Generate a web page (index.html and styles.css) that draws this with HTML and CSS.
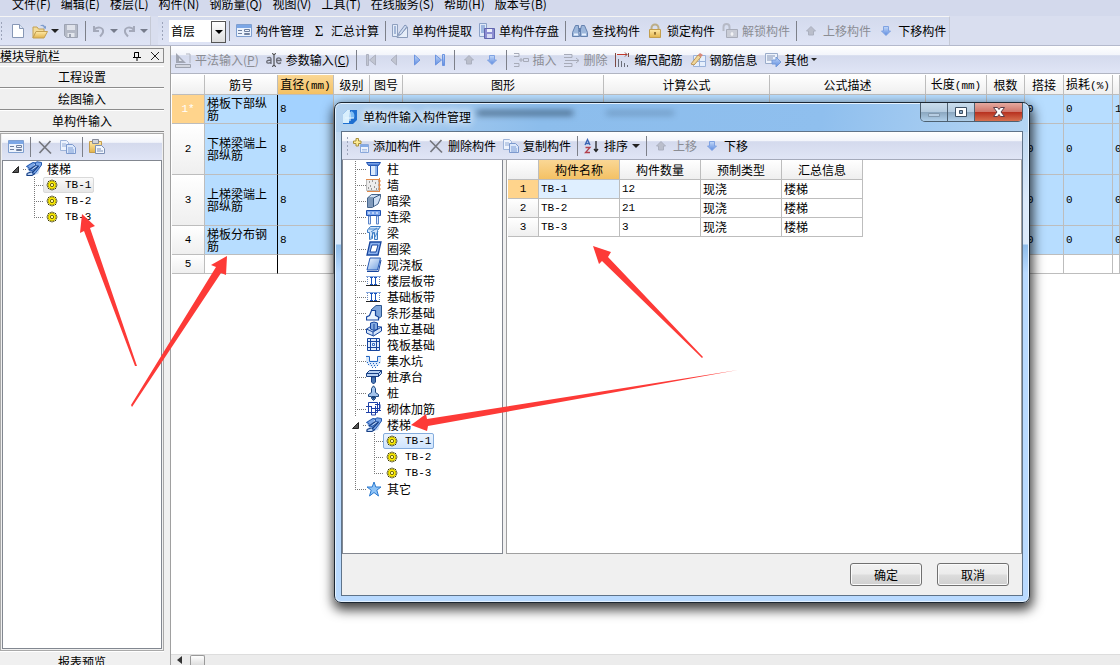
FILE: index.html
```
<!DOCTYPE html>
<html lang="zh-CN">
<head>
<meta charset="utf-8">
<title>单构件输入</title>
<link rel="stylesheet" href="styles.css">
</head>
<body>
<svg class="defs" aria-hidden="true">
  <defs>
    <linearGradient id="blue" x1="0" y1="0" x2="1" y2="1"><stop offset="0" stop-color="#f4f9ff"/><stop offset="1" stop-color="#6f9fe0"/></linearGradient>
    <linearGradient id="deep" x1="0" y1="0" x2="0" y2="1"><stop offset="0" stop-color="#9cc0f5"/><stop offset="1" stop-color="#2f62c8"/></linearGradient>
    <linearGradient id="pale" x1="0" y1="0" x2="0" y2="1"><stop offset="0" stop-color="#c4d9f8"/><stop offset="1" stop-color="#5c8ae0"/></linearGradient>
    <linearGradient id="gold" x1="0" y1="0" x2="0" y2="1"><stop offset="0" stop-color="#ffeaa8"/><stop offset="1" stop-color="#e2b34c"/></linearGradient>
  </defs>
  <symbol id="new" viewBox="0 0 16 16"><path d="M2.500 1.500h7l4 4v9h-11z" fill="#fff" stroke="#8797b5"/><path d="M9.500 1.500v4h4" fill="#dce6f6" stroke="#8797b5"/></symbol>
  <symbol id="open" viewBox="0 0 16 16"><path d="M1 4h4l1.500 2H12v3H4l-3 6z" fill="#f3dc9a" stroke="#c4a052"/><path d="M1 15l3-6.500h11.500L12 15z" fill="url(#gold)" stroke="#c4a052"/><path d="M8 3c2-2 4-1.500 5 .5l1-.8v3l-3-.4 1-.9c-1-1.500-2.500-1.700-4-1.400z" fill="#7f9dcc"/></symbol>
  <symbol id="save" viewBox="0 0 16 16"><path d="M1.500 1.500h13v13h-11l-2-2z" fill="#b4b9c6" stroke="#9da3b2"/><path d="M4 2h8v5H4z" fill="#dfe2ea"/><path d="M4.500 10h7v4h-7z" fill="#e3e6ed"/><path d="M6 11h2v3H6z" fill="#9da3b2"/></symbol>
  <symbol id="undo" viewBox="0 0 16 16"><path d="M3 3v5h5" fill="none" stroke="#a4a9ba" stroke-width="2"/><path d="M3 7c3-4 10-3 9 2-.3 2-1.500 3-3 4.500" fill="none" stroke="#a4a9ba" stroke-width="2"/></symbol>
  <symbol id="redo" viewBox="0 0 16 16"><path d="M13 3v5H8" fill="none" stroke="#a4a9ba" stroke-width="2"/><path d="M13 7c-3-4-10-3-9 2 .3 2 1.500 3 3 4.500" fill="none" stroke="#a4a9ba" stroke-width="2"/></symbol>
  <symbol id="form" viewBox="0 0 16 16"><path d="M.5 1.500h15v12H.5z" fill="#edf3fd" stroke="#7f9fd0"/><path d="M1 2h14v3H1z" fill="#7ba6e6"/><path d="M2 7.500h4M2 10.500h4M8.500 6.500h5v2h-5zM8.500 10.500h5v1h-5z" fill="none" stroke="#6e7f9e"/></symbol>
  <symbol id="extract" viewBox="0 0 16 16"><path d="M.5 1.500h5v12h-5z" fill="#e2eaf7" stroke="#8fa0bf"/><path d="M2 4h2M2 6h2M2 8h2M2 10h2" stroke="#6483b8"/><path d="M5 14.500L15.500 4v10.500z" fill="#e6edf8" stroke="#8b9cba"/><path d="M7 10l6-8 2 1.500-6 8-2.500.7z" fill="#cfdcf0" stroke="#8093b8"/></symbol>
  <symbol id="store" viewBox="0 0 16 16"><path d="M.5.5h7v13h-7z" fill="#dfe9f8" stroke="#8ba1c8"/><path d="M2 3h4M2 5h4M2 7h3M2 9h3" stroke="#5d83c6"/><path d="M5.500 5.500h10v10h-10z" fill="#8d8ed2" stroke="#6065ad"/><path d="M8 6h5v3H8z" fill="#eceffc"/><path d="M8 11h5v4H8z" fill="#d8dcf4"/></symbol>
  <symbol id="find" viewBox="0 0 16 16"><path d="M3.500 2.500h3v4l1 7h-7v-4zM9.500 2.500h3l3 7v4h-7v-7z" fill="#9db7db" stroke="#6481ae"/><path d="M2 11.500h4M10 11.500h4" stroke="#e8f1ff" stroke-width="2"/><path d="M7 5h2v4H7z" fill="#5f7dad"/></symbol>
  <symbol id="lock" viewBox="0 0 16 16"><path d="M4.500 7V5a3.500 3.500 0 0 1 7 0v2" fill="none" stroke="#bcae88" stroke-width="2"/><path d="M2.500 6.500h11v8h-11z" fill="url(#gold)" stroke="#c39e4e"/><path d="M8 9v3M7 10h2" stroke="#75521b"/></symbol>
  <symbol id="unlock" viewBox="0 0 16 16"><path d="M1.500 8V4a3 3 0 0 1 6 0v3" fill="none" stroke="#b6bac6" stroke-width="2"/><path d="M4.500 6.500h11v8h-11z" fill="#c9ccd6" stroke="#a8acb9"/><path d="M10 9v4M8.500 11h3" stroke="#fff"/></symbol>
  <symbol id="up" viewBox="0 0 16 16"><path d="M8 3.500l4.500 4.500h-2v4h-5V8h-2z" fill="#babecb" stroke="#abb0bf"/></symbol>
  <symbol id="down" viewBox="0 0 16 16"><path d="M8 12.500L3.500 8h2V3.500h5V8h2z" fill="url(#pale)" stroke="#7fa2e2"/></symbol>
  <symbol id="level" viewBox="0 0 16 16"><path d="M1 1v10h10z" fill="#a1a6b3"/><path d="M4 6v3h3z" fill="#e4e7ef"/><path d="M.5 12.500h15v3H.5z" fill="#d3d6df" stroke="#9da2ae"/><path d="M11 2h4v9" stroke="#b0b4c0" fill="none"/></symbol>
  <symbol id="param" viewBox="0 0 16 16"><path d="M1 6c3-1.500 4 0 4 1v5M5 8C1.500 8 .7 9 .7 10S3 12 5 10M10.500 8.500h4.500c0-3.500-4.500-3.500-4.500 0 0 3.500 3 3.500 4.500 2" fill="none" stroke="#6b6d77" stroke-width="1.300"/><path d="M6 1.500l2 1 2-1M8 2.500v11M6 14.500l2-1 2 1" fill="none" stroke="#333"/></symbol>
  <symbol id="first" viewBox="0 0 16 16"><path d="M3.500 2.500h2v11h-2zM12.500 3v10l-6-5z" fill="#c1c5d1" stroke="#adb1c0"/></symbol>
  <symbol id="prev" viewBox="0 0 16 16"><path d="M10.500 3v10L5 8z" fill="#c1c5d1" stroke="#adb1c0"/></symbol>
  <symbol id="next" viewBox="0 0 16 16"><path d="M5.500 3v10L11 8z" fill="url(#pale)" stroke="#6c94e0"/></symbol>
  <symbol id="last" viewBox="0 0 16 16"><path d="M3.500 3v10l6-5zM10.500 2.500h2v11h-2z" fill="url(#pale)" stroke="#6c94e0"/></symbol>
  <symbol id="insert" viewBox="0 0 16 16"><path d="M1 1.500h5v3H1M1 11.500h5v3H1M6 8h4M8 6v4M10.500 6.500h5v3h-5z" fill="none" stroke="#a7abb8"/></symbol>
  <symbol id="remove" viewBox="0 0 16 16"><path d="M0 2.500h8v3H0M0 11.500h8v3H0M1 8.500h14M12 6l3 2.500L12 11" fill="none" stroke="#a7abb8"/></symbol>
  <symbol id="scale" viewBox="0 0 16 16"><path d="M2 2.500h10" stroke="#c5392b"/><path d="M.5 1v14M13.500 1v4M10 .5l2 2-2 2" fill="none" stroke="#7d4a44"/><path d="M3.500 7v8M6.500 9v6M9.500 11v4M12.500 13v2" stroke="#6b6e79"/></symbol>
  <symbol id="info" viewBox="0 0 16 16"><path d="M3.500 3.500h12v11h-12z" fill="#e6effc" stroke="#9ab2da"/><path d="M4 9.500h11M9.500 4v10" stroke="#9ab2da"/><path d="M1 12L8 3l3 2-7 8z" fill="#f1d79a" stroke="#ba9457"/><path d="M8 3l2-2 3 2-2 2z" fill="#d9897a"/></symbol>
  <symbol id="other" viewBox="0 0 16 16"><path d="M.5 1.500h12v10H.5z" fill="#eef3fc" stroke="#9aacca"/><path d="M2 4h8M2 6h6M2 8h5" stroke="#8294b5"/><path d="M7 8h4V5l5 5-5 5v-3H7z" fill="url(#pale)" stroke="#759ad9"/></symbol>
  <symbol id="cross" viewBox="0 0 16 16"><path d="M2 2.500l12 12M13.500 2L2.500 14" fill="none" stroke="#75777e" stroke-width="1.700"/></symbol>
  <symbol id="copy" viewBox="0 0 16 16"><path d="M.5 1.500h6l2 2v8h-8z" fill="#edf3fd" stroke="#9eb4d9"/><path d="M2 5h4M2 7h4" stroke="#93acd6"/><path d="M6.500 5.500h6l3 3v6h-9z" fill="#dce8fb" stroke="#7c99cd"/><path d="M8 9h5M8 11h6M8 13h6" stroke="#7d9dd5"/></symbol>
  <symbol id="paste" viewBox="0 0 16 16"><path d="M.5 2.500h12v11H.5z" fill="url(#gold)" stroke="#c39c4c"/><path d="M3.500.5h6v4h-6z" fill="#d2d5dc" stroke="#858a98"/><path d="M6.500 6.500h6l3 3v5h-9z" fill="#f2f6fd" stroke="#7c90b5"/><path d="M8 10h4M8 12h6" stroke="#7c90b5"/></symbol>
  <symbol id="add" viewBox="0 0 16 16"><path d="M7.500 6.500h8v8h-8z" fill="#edf3fd" stroke="#8aa8da"/><path d="M8 7h7v2H8z" fill="#84abe7"/><path d="M9 11.500h5M9 13h5" stroke="#adc2e6"/><path d="M3 .5h2.500V3H8v2.500H5.500V8H3V5.500H.5V3H3z" fill="#ffec94" stroke="#a8903d"/></symbol>
  <symbol id="sort" viewBox="0 0 16 16"><path d="M1 7L3.500 1.500 6 7M2 5.500h3" fill="none" stroke="#3864b4" stroke-width="1.300"/><path d="M1.500 9.500h4.500l-4.500 5H6" fill="none" stroke="#b2404e" stroke-width="1.300"/><path d="M12 3v10M10 11l2 2.500 2-2.500" fill="none" stroke="#222" stroke-width="1.300"/></symbol>
  <symbol id="stair" viewBox="0 0 16 16"><path d="M0 5l6-4h9l1 1-4 11-11 2-1-2 3-2z" fill="#c3d9f8"/><path d="M.5 5.500L7 1.500l2.500.5v2.500l3 .5L6 9.500 3 9V6.500zM6 9.500v2.500l3 .5 6.500-8.500V1.500L11 .8 8.500 2.500" fill="#7ba6e6" stroke="#2458ae"/><path d="M3 9l6.500-4.500M6 12l6.500-7M1 12.500v2h5l3-2M1 12.500l4-1.500" fill="none" stroke="#173f84" stroke-width="1.200"/></symbol>
  <symbol id="gear" viewBox="0 0 12 12"><path d="M6 .5v11M.5 6h11M2 2l8 8M10 2l-8 8M4 1l4 10M8 1L4 11M1 4l10 4M11 4L1 8" stroke="#3d3800"/><circle cx="6" cy="6" r="4" fill="#ffee00" stroke="#8f8600" stroke-width=".6"/><circle cx="6" cy="6" r="1.700" fill="#fff79a" stroke="#4c4600" stroke-width=".8"/></symbol>
  <symbol id="column" viewBox="0 0 16 16"><path d="M.5 1.500h14l-2 3h-10z" fill="url(#deep)" stroke="#1c4fae"/><path d="M4.500 4.500h7v10h-7z" fill="#dceafc" stroke="#2a5cb4"/><path d="M9 5h2v9H9z" fill="#8fb4ec"/></symbol>
  <symbol id="wall" viewBox="0 0 16 16"><path d="M.5 2.500h12v11H.5z" fill="#ececec" stroke="#bbb"/><path d="M3 5h1M6 4h1M9 6h1M4 9h1M8 10h1M5 12h1M10 12h1M2 11h1" stroke="#444"/><path d="M13.500 1v14M0 2.500h13M12 4h3M12 8h3M12 12h3M1 14.500h12" stroke="#e08a4c"/></symbol>
  <symbol id="hidden-beam" viewBox="0 0 16 16"><path d="M1.500 5l4-3.500h9v3L12 11l-6 3.500h-4.500z" fill="#cfdff4" stroke="#46658c"/><path d="M1.500 5h6v9M7.500 5l7-3.500" fill="none" stroke="#35577f"/><path d="M2 6h5v8H2z" fill="#7f99ba"/></symbol>
  <symbol id="link-beam" viewBox="0 0 16 16"><path d="M.5 1.500h14v5H.5z" fill="#7aa4ec" stroke="#1c4fae"/><path d="M2 4h2M6 4h2M10 4h2" stroke="#fff"/><path d="M2.500 7h2v8h-2zM10.500 7h2v8h-2z" fill="#dbe9fd" stroke="#5b83c7"/></symbol>
  <symbol id="beam" viewBox="0 0 16 16"><path d="M1.500 5l3-3.500h10l-3 4v9h-3v-7h-2v6l-3 1v-7h-2z" fill="#cfe4fb" stroke="#3a7ac2"/><path d="M3 4h10M5 7l6-4M9 12l3-6M5 13l3-6" stroke="#4a88cc"/></symbol>
  <symbol id="ring-beam" viewBox="0 0 16 16"><path d="M4 1h11l-3 13H1z" fill="#8bb2ef" stroke="#17459d" stroke-width="1.300"/><path d="M6 4h6l-2 7H4z" fill="#fff" stroke="#17459d"/></symbol>
  <symbol id="slab" viewBox="0 0 16 16"><path d="M4 1h10.500l-3 12H1z" fill="url(#blue)" stroke="#2458b4"/><path d="M1 14.500h11.500L15 3" fill="none" stroke="#17459d"/></symbol>
  <symbol id="strip" viewBox="0 0 16 16"><path d="M0 3.500h15" stroke="#88a9df"/><path d="M0 12.500h14" stroke="#222"/><path d="M1.500 4v8M13.500 4v8" stroke="#6687bd" stroke-dasharray="1 1"/><path d="M4 4.500h3M4 11.500h3M8 4.500h3M8 11.500h3M5.500 4v8M9.500 4v8" stroke="#1853bd"/></symbol>
  <symbol id="strip-base" viewBox="0 0 16 16"><path d="M5 5l5-4.500h5.500v11l-3 2z" fill="#7fa6dc" stroke="#2c568e"/><path d="M5.500 5.500h4v5l3 1.500v3H.5v-3l3-1.500z" fill="#edf5ff" stroke="#17459d" stroke-width="1.200"/></symbol>
  <symbol id="single-base" viewBox="0 0 16 16"><path d="M.5 8l5-3 10 1v4l-8 5-7-3z" fill="#d3e3f9" stroke="#17459d"/><path d="M4.500 2l3.500-1 3.500 1v6L8 9.500 4.500 8z" fill="#84aae0" stroke="#17459d"/><path d="M8 3v6M.5 8L7 11l8.500-5M7 11v4" fill="none" stroke="#17459d"/></symbol>
  <symbol id="raft" viewBox="0 0 16 16"><path d="M1.500 1.500h12v12h-12z" fill="#e2edfc" stroke="#17459d"/><path d="M4.500 1v13M10.500 1v13M1 4.500h13M1 10.500h13" stroke="#17459d"/><path d="M6.500 6.500h2v2h-2z" fill="#fff" stroke="#3970c5"/></symbol>
  <symbol id="pit" viewBox="0 0 16 16"><path d="M0 2.500h3.500v5h8v-5H15v7c-4 6-11 6-15 0z" fill="#dbe9fb"/><path d="M0 3.500h3.500v5h8v-5H15" fill="none" stroke="#2467c1"/><path d="M1 9.500h1M4 10.500h1M7 10.500h1M10 10.500h1M13 9.500h1M2 11.500h1M5 12.500h1M8 12.500h1M11 12.500h1M6 14.500h1M9 14.500h1" stroke="#2467c1"/></symbol>
  <symbol id="cap" viewBox="0 0 16 16"><path d="M.5 4.500l3-3h12v3l-3 3H.5z" fill="#b6d0f2" stroke="#173f84"/><path d="M.5 4.500h12l3-3M12.500 4.500v3" fill="none" stroke="#173f84"/><path d="M5.500 8h4v5l-2 2-2-2z" fill="#4c78b3" stroke="#173f84"/></symbol>
  <symbol id="pile" viewBox="0 0 16 16"><path d="M5.500 3.500L7.500.8l2 2.700v4l3 2v2h-3v2l-2 2-2-2v-2h-3v-2l3-2z" fill="#a3c4ec" stroke="#1b467f"/><path d="M6 11h3v2l-1.500 2L6 13z" fill="#1b467f"/></symbol>
  <symbol id="masonry" viewBox="0 0 16 16"><path d="M2.500 1.500h9v10h-9zM0 5.500h6M0 11.500h6M5.500 5v9h4v-9M9 3.500h5v4H5M13.500 1v8M9 9.500h6" fill="none" stroke="#1e40a8"/></symbol>
  <symbol id="star" viewBox="0 0 16 16"><path d="M8 1l1.800 5H15l-4.200 3.200L12.500 15 8 11.500 3.500 15l1.700-5.800L1 6h5.200z" fill="#8fc4f7" stroke="#2b79cf"/></symbol>
  <symbol id="twist" viewBox="0 0 7 7"><path d="M6.500.500v6h-6z" fill="#555" stroke="#222"/></symbol>
  <symbol id="pin" viewBox="0 0 10 10"><path d="M2.500 6V1.500h4V6M6.500 1v5M1 6.500h8M5 7v3" fill="none" stroke="#000"/></symbol>
  <symbol id="close" viewBox="0 0 10 10"><path d="M1 1l8 8M9 1L1 9" stroke="#222" fill="none"/></symbol>
  <symbol id="app" viewBox="0 0 16 16"><path d="M5 1h10v10l-4 4H1V5z" fill="#1e6fd0"/><path d="M1 5l4-4h3l-1 13H1z" fill="#d9effd"/><path d="M9 2c3 1 4 4 3 7l-5 1z" fill="#7dbdf5"/><path d="M3 9h9M8 3v9" stroke="#e8f6ff"/></symbol>
</svg>

<nav class="menubar">
  <button>文件(F)</button><button>编辑(E)</button><button>楼层(L)</button><button>构件(N)</button><button>钢筋量(Q)</button><button>视图(V)</button><button>工具(T)</button><button>在线服务(S)</button><button>帮助(H)</button><button>版本号(B)</button>
</nav>

<div class="bar main-bar">
  <div class="group file-group">
    <i class="grip"></i>
    <button aria-label="新建"><svg><use href="#new"/></svg></button>
    <button class="drop" aria-label="打开"><svg><use href="#open"/></svg><i class="caret"></i></button>
    <button aria-label="保存" disabled><svg><use href="#save"/></svg></button>
    <i class="sep"></i>
    <button class="drop" aria-label="撤销" disabled><svg><use href="#undo"/></svg><i class="caret"></i></button>
    <button class="drop" aria-label="重做" disabled><svg><use href="#redo"/></svg><i class="caret"></i></button>
  </div>
  <div class="group">
    <i class="grip"></i>
    <span class="floor"><select aria-label="楼层"><option>首层</option></select></span>
    <i class="sep"></i>
    <button><svg><use href="#form"/></svg>构件管理</button>
    <button><span class="sigma">Σ</span>汇总计算</button>
    <i class="sep"></i>
    <button><svg><use href="#extract"/></svg>单构件提取</button>
    <button><svg><use href="#store"/></svg>单构件存盘</button>
    <i class="sep"></i>
    <button><svg><use href="#find"/></svg>查找构件</button>
    <button><svg><use href="#lock"/></svg>锁定构件</button>
    <button disabled><svg><use href="#unlock"/></svg>解锁构件</button>
    <i class="sep"></i>
    <button disabled><svg><use href="#up"/></svg>上移构件</button>
    <button><svg><use href="#down"/></svg>下移构件</button>
  </div>
</div>

<div class="workspace">
  <aside class="side">
    <header class="side-title"><span>模块导航栏</span><button aria-label="固定"><svg><use href="#pin"/></svg></button><button aria-label="关闭"><svg><use href="#close"/></svg></button></header>
    <button class="module">工程设置</button>
    <button class="module">绘图输入</button>
    <button class="module">单构件输入</button>
    <section class="side-panel">
      <div class="bar side-bar">
        <button aria-label="构件管理"><svg><use href="#form"/></svg></button>
        <i class="sep"></i>
        <button aria-label="删除"><svg><use href="#cross"/></svg></button>
        <button aria-label="复制"><svg><use href="#copy"/></svg></button>
        <i class="sep"></i>
        <button aria-label="粘贴"><svg><use href="#paste"/></svg></button>
      </div>
      <div class="side-tree">
        <ul class="tree">
          <li class="end"><div class="node"><span class="twist"><svg><use href="#twist"/></svg></span><svg><use href="#stair"/></svg>楼梯</div>
            <ul>
              <li><div class="node"><i class="stub"></i><span class="leaf current"><svg><use href="#gear"/></svg>TB-1</span></div></li>
              <li><div class="node"><i class="stub"></i><span class="leaf"><svg><use href="#gear"/></svg>TB-2</span></div></li>
              <li><div class="node"><i class="stub"></i><span class="leaf"><svg><use href="#gear"/></svg>TB-3</span></div></li>
            </ul>
          </li>
        </ul>
      </div>
    </section>
    <button class="module report">报表预览</button>
  </aside>

  <main class="editor">
    <div class="bar edit-bar">
      <button disabled><svg><use href="#level"/></svg><span>平法输入(<u>P</u>)</span></button>
      <button><svg><use href="#param"/></svg><span>参数输入(<u>C</u>)</span></button>
      <i class="sep"></i>
      <button aria-label="首条" disabled><svg><use href="#first"/></svg></button>
      <button aria-label="上一条" disabled><svg><use href="#prev"/></svg></button>
      <button aria-label="下一条"><svg><use href="#next"/></svg></button>
      <button aria-label="末条"><svg><use href="#last"/></svg></button>
      <i class="sep"></i>
      <button aria-label="上移" disabled><svg><use href="#up"/></svg></button>
      <button aria-label="下移"><svg><use href="#down"/></svg></button>
      <i class="sep"></i>
      <button disabled><svg><use href="#insert"/></svg>插入</button>
      <button disabled><svg><use href="#remove"/></svg>删除</button>
      <button><svg><use href="#scale"/></svg>缩尺配筋</button>
      <button><svg><use href="#info"/></svg>钢筋信息</button>
      <button><svg><use href="#other"/></svg>其他<i class="caret"></i></button>
    </div>
    <div class="sheet">
      <table class="grid rebar">
        <colgroup><col class="c-no"><col class="c-name"><col class="c-dia"><col class="c-grade"><col class="c-fig"><col class="c-shape"><col class="c-formula"><col class="c-desc"><col class="c-len"><col class="c-count"><col class="c-lap"><col class="c-loss"><col></colgroup>
        <thead><tr><th></th><th>筋号</th><th class="hot">直径<b>(mm)</b></th><th>级别</th><th>图号</th><th>图形</th><th>计算公式</th><th>公式描述</th><th>长度<b>(mm)</b></th><th>根数</th><th>搭接</th><th>损耗<b>(%)</b></th><th></th></tr></thead>
        <tbody>
          <tr class="short"><th class="active">1*</th><td>梯板下部纵筋</td><td class="focus">8</td><td></td><td></td><td></td><td></td><td></td><td></td><td></td><td>0</td><td>0</td><td>1</td></tr>
          <tr class="tall"><th>2</th><td>下梯梁端上部纵筋</td><td>8</td><td></td><td></td><td></td><td></td><td></td><td></td><td></td><td>0</td><td>0</td><td>0</td></tr>
          <tr class="tall"><th>3</th><td>上梯梁端上部纵筋</td><td>8</td><td></td><td></td><td></td><td></td><td></td><td></td><td></td><td>0</td><td>0</td><td>0</td></tr>
          <tr class="short"><th>4</th><td>梯板分布钢筋</td><td>8</td><td></td><td></td><td></td><td></td><td></td><td></td><td></td><td>0</td><td>0</td><td>0</td></tr>
          <tr class="blank"><th>5</th><td></td><td></td><td></td><td></td><td></td><td></td><td></td><td></td><td></td><td></td><td></td><td></td></tr>
        </tbody>
      </table>
    </div>
    <div class="scroll"><i class="scroll-arrow"></i><i class="scroll-thumb"></i></div>
  </main>
</div>

<section class="dialog" role="dialog" aria-labelledby="dialog-title">
  <header class="caption">
    <svg><use href="#app"/></svg><h1 id="dialog-title">单构件输入构件管理</h1>
    <i class="haze haze-shape"></i><i class="haze haze-formula"></i>
    <div class="window-buttons">
      <button aria-label="最小化" disabled><svg viewBox="0 0 20 14"><path d="M4.500 8.500h11v3h-11z" fill="#b7cde2" stroke="#8299ae"/></svg></button>
      <button aria-label="最大化"><svg viewBox="0 0 20 14"><path d="M4.500 2.500h11v9h-11z" fill="#fff" stroke="#3c4f63"/><path d="M8.500 5.500h3v3h-3z" fill="#8ba9c6" stroke="#3c4f63"/></svg></button>
      <button aria-label="关闭窗口" class="win-close"><svg viewBox="0 0 20 14"><path d="M4.500 2.500h4L10 4.500l1.500-2h4L12 7l3.500 4.500h-4L10 9.500l-1.500 2h-4L8 7z" fill="#fff" stroke="#5c3d47"/></svg></button>
    </div>
  </header>
  <div class="client">
    <div class="bar dialog-bar">
      <i class="grip"></i>
      <button><svg><use href="#add"/></svg>添加构件</button>
      <button><svg><use href="#cross"/></svg>删除构件</button>
      <button><svg><use href="#copy"/></svg>复制构件</button>
      <i class="sep"></i>
      <button><svg><use href="#sort"/></svg>排序<i class="caret"></i></button>
      <i class="sep"></i>
      <button disabled><svg><use href="#up"/></svg>上移</button>
      <button><svg><use href="#down"/></svg>下移</button>
    </div>
    <div class="panes">
      <div class="types">
        <ul class="tree">
          <li><div class="node"><i class="stub"></i><svg><use href="#column"/></svg>柱</div></li>
          <li><div class="node"><i class="stub"></i><svg><use href="#wall"/></svg>墙</div></li>
          <li><div class="node"><i class="stub"></i><svg><use href="#hidden-beam"/></svg>暗梁</div></li>
          <li><div class="node"><i class="stub"></i><svg><use href="#link-beam"/></svg>连梁</div></li>
          <li><div class="node"><i class="stub"></i><svg><use href="#beam"/></svg>梁</div></li>
          <li><div class="node"><i class="stub"></i><svg><use href="#ring-beam"/></svg>圈梁</div></li>
          <li><div class="node"><i class="stub"></i><svg><use href="#slab"/></svg>现浇板</div></li>
          <li><div class="node"><i class="stub"></i><svg><use href="#strip"/></svg>楼层板带</div></li>
          <li><div class="node"><i class="stub"></i><svg><use href="#strip"/></svg>基础板带</div></li>
          <li><div class="node"><i class="stub"></i><svg><use href="#strip-base"/></svg>条形基础</div></li>
          <li><div class="node"><i class="stub"></i><svg><use href="#single-base"/></svg>独立基础</div></li>
          <li><div class="node"><i class="stub"></i><svg><use href="#raft"/></svg>筏板基础</div></li>
          <li><div class="node"><i class="stub"></i><svg><use href="#pit"/></svg>集水坑</div></li>
          <li><div class="node"><i class="stub"></i><svg><use href="#cap"/></svg>桩承台</div></li>
          <li><div class="node"><i class="stub"></i><svg><use href="#pile"/></svg>桩</div></li>
          <li><div class="node"><i class="stub"></i><svg><use href="#masonry"/></svg>砌体加筋</div></li>
          <li><div class="node"><span class="twist"><svg><use href="#twist"/></svg></span><svg><use href="#stair"/></svg>楼梯</div>
            <ul>
              <li><div class="node"><i class="stub"></i><span class="leaf selected"><svg><use href="#gear"/></svg>TB-1</span></div></li>
              <li><div class="node"><i class="stub"></i><span class="leaf"><svg><use href="#gear"/></svg>TB-2</span></div></li>
              <li><div class="node"><i class="stub"></i><span class="leaf"><svg><use href="#gear"/></svg>TB-3</span></div></li>
            </ul>
          </li>
          <li><div class="node"><i class="stub"></i><svg><use href="#star"/></svg>其它</div></li>
        </ul>
      </div>
      <div class="parts">
        <table class="grid part-grid">
          <thead><tr><th></th><th class="hot">构件名称</th><th>构件数量</th><th>预制类型</th><th>汇总信息</th></tr></thead>
          <tbody>
            <tr><th class="active">1</th><td class="focus">TB-1</td><td>12</td><td>现浇</td><td>楼梯</td></tr>
            <tr><th>2</th><td>TB-2</td><td>21</td><td>现浇</td><td>楼梯</td></tr>
            <tr><th>3</th><td>TB-3</td><td>3</td><td>现浇</td><td>楼梯</td></tr>
          </tbody>
        </table>
      </div>
    </div>
    <footer class="actions"><button>确定</button><button>取消</button></footer>
  </div>
</section>

<svg class="marks" viewBox="0 0 1120 665" width="1120" height="665" aria-hidden="true">
  <path d="M82 214L95 226L90 228L137 366L135 366L84 231L80 233Z"/>
  <path d="M227 256L226 275L221 273L132 407L131 405L216 267L211 265Z"/>
  <path d="M593 246L611 252L608 257L703 357L702 358L602 261L599 264Z"/>
  <path d="M411 425L426 414L427 419L738 370L428 426L427 431Z"/>
</svg>
</body>
</html>
```
FILE: styles.css
```
* { box-sizing: border-box; }

body {
  margin: 0;
  height: 100vh;
  display: flex;
  flex-direction: column;
  overflow: hidden;
  position: relative;
  background: #f0f0f0;
  color: #000;
  font: 12px/16px "Noto Sans CJK SC", sans-serif;
}

button {
  font: inherit;
  color: inherit;
  border: 0;
  padding: 0;
  background: none;
}

ul { list-style: none; margin: 0; padding: 0; }
.defs { position: absolute; width: 0; height: 0; }

/* Menu and toolbars */
.menubar {
  display: flex;
  align-items: flex-end;
  flex: none;
  gap: 10px;
  height: 16px;
  padding: 0 12px 4px;
  background: #d3d9ec;
  white-space: nowrap;
}

.bar {
  display: flex;
  align-items: center;
  flex: none;
  white-space: nowrap;
  background: linear-gradient(#fff 0, #f3f5fb 32%, #d4daed 36%, #e0e5f6 100%);
}
.bar svg { width: 16px; height: 16px; flex: none; }
.bar button { display: flex; align-items: center; gap: 4px; padding: 0 3px 0 4px; }
.bar button:disabled { color: #8b8d94; }

.sep { width: 1px; height: 20px; margin: 0 2px 0 3px; background: #7d8089; flex: none; }
.caret { border: 4px solid transparent; border-top-color: #222; border-bottom-width: 0; }
.bar button:disabled .caret { border-top-color: #777c8c; }
.grip { width: 3px; height: 20px; flex: none; background: radial-gradient(circle, #9ba3b9 1px, transparent 1px) 0 0 / 3px 4px; }
.sigma { width: 16px; text-align: center; font: 15px/16px "Liberation Serif", serif; }

.main-bar { height: 30px; align-items: stretch; background: #d9deef; border-bottom: 1px solid #b4b9cc; }
.group {
  display: flex;
  align-items: center;
  padding-left: 3px;
  border-top: 1px solid #f5f5f5;
  border-right: 1px solid #c5c9d5;
  background: linear-gradient(#d3daed, #dfe4f5);
}
.file-group { width: 151px; padding-left: 0; margin-right: 7px; }
.file-group .grip { margin-right: 3px; }
.file-group .drop { gap: 3px; padding: 0 0 0 3px; }

.floor { position: relative; height: 22px; margin: 0 0 0 5px; }
.floor select {
  appearance: none;
  width: 57px;
  height: 22px;
  border: 0;
  padding: 0 2px;
  background: #fff;
  color: #000;
  font: 12px/22px "Noto Sans CJK SC", sans-serif;
}
.floor::before {
  content: "";
  position: absolute;
  right: 0;
  top: 1px;
  width: 13px;
  height: 20px;
  border: 1px solid #555;
  background: linear-gradient(#fff, #ddd);
  pointer-events: none;
}
.floor::after {
  content: "";
  position: absolute;
  right: 3px;
  top: 10px;
  border: 4px solid transparent;
  border-top-color: #000;
  border-bottom: 0;
  pointer-events: none;
}

/* Module navigator */
.workspace { display: flex; flex: 1; min-height: 0; }
.side { width: 164px; display: flex; flex-direction: column; flex: none; padding-top: 2px; }
.side-title {
  display: flex;
  align-items: center;
  height: 15px;
  border: 1px solid #8b8b8b;
  border-left: 0;
  margin-bottom: 3px;
  padding-right: 3px;
  gap: 8px;
}
.side-title span { flex: 1; }
.side-title svg { display: block; width: 10px; height: 10px; }
.module {
  height: 22px;
  flex: none;
  line-height: 20px;
  border-top: 1px solid #fff;
  border-bottom: 1px solid #8c8c8c;
  background: #f0f0f0;
}
.side-panel {
  flex: 1;
  display: flex;
  flex-direction: column;
  min-height: 0;
  margin-top: 1px;
  padding: 0 1px 1px;
  border: 1px solid #a9a9a9;
}
.side-bar { height: 26px; padding-left: 2px; }
.side-tree { flex: 1; border: 1px solid #828790; background: #fff; padding-left: 9px; }
.report { height: 14px; overflow: hidden; border-bottom: 0; }

/* Trees */
.tree li { background: repeating-linear-gradient(#777 0 1px, transparent 1px 2px) 3px 0 / 1px 100% no-repeat; }
.tree li:last-child { background-size: 1px 8px; }
.tree li.end { background: none; }
.tree ul { margin-left: 19px; }
.node { display: flex; align-items: center; height: 16px; white-space: nowrap; }
.node > svg { width: 16px; height: 16px; margin-right: 5px; }
.stub { width: 11px; height: 1px; margin-left: 3px; background: repeating-linear-gradient(90deg, #777 0 1px, transparent 1px 2px); }
.tree ul .stub { width: 9px; }
.twist {
  display: flex;
  width: 14px;
  height: 16px;
  align-items: center;
  background: repeating-linear-gradient(90deg, #777 0 1px, transparent 1px 2px) 11px 8px / 3px 1px no-repeat, linear-gradient(#fff, #fff) 0 0 / 8px 16px no-repeat;
}
.twist svg { width: 7px; height: 7px; }
.leaf {
  display: flex;
  align-items: center;
  height: 16px;
  gap: 7px;
  padding: 0 2px;
  border: 1px solid transparent;
  border-radius: 2px;
  font: 11px/14px "Liberation Mono", monospace;
}
.leaf svg { width: 12px; height: 12px; }
.current { border-color: #d9d9d9; background: linear-gradient(#fafafa, #e6e6e6); }
.selected { border-color: #84acdd; background: linear-gradient(#ebf4fe, #cfe4fe); }

/* Rebar sheet */
.editor { flex: 1; min-width: 0; display: flex; flex-direction: column; margin-left: 6px; border-left: 1px solid #a0a0a0; background: #fff; }
.edit-bar { height: 28px; border-bottom: 1px solid #b1b5c2; }
.edit-bar .caret { border-width: 3px; border-bottom-width: 0; margin-left: -2px; }
.sheet { flex: 1; min-height: 0; overflow: hidden; padding: 1px 0 0 1px; }

.grid { border-collapse: separate; border-spacing: 0; table-layout: fixed; line-height: 12px; }
.grid th, .grid td { padding: 0 0 0 2px; border-right: 1px solid #bdbdbd; border-bottom: 1px solid #bdbdbd; text-align: left; }
.grid th { padding: 0; text-align: center; font-weight: normal; background: linear-gradient(#fff, #efefef); white-space: nowrap; }
.grid b, .grid tbody { font: 11px/12px "Liberation Mono", monospace; }
.grid .hot { background: linear-gradient(#fad795, #f4c164); }
.grid .active { background: #ffd48c; }
.rebar td:nth-child(2), .part-grid td:nth-child(n+4) { font: 12px/12px "Noto Sans CJK SC", sans-serif; }

.rebar { width: 100%; }
.rebar thead tr { height: 20px; }
.rebar td { background: #b7ddff; }
.rebar td:nth-child(2) { border-right-color: #000; }
.rebar .active { color: #fff; }
.rebar .focus { background: #a3d2ff; }
.rebar .short { height: 29px; }
.rebar .tall { height: 51px; }
.rebar .blank { height: 19px; }
.rebar .blank td { background: #fff; }
.c-no { width: 33px; }
.c-name { width: 73px; }
.c-dia { width: 56px; }
.c-grade { width: 36px; }
.c-fig { width: 33px; }
.c-shape { width: 201px; }
.c-formula { width: 166px; }
.c-desc { width: 156px; }
.c-len { width: 61px; }
.c-count { width: 38px; }
.c-lap { width: 39px; }
.c-loss { width: 49px; }

.scroll { display: flex; align-items: center; height: 11px; padding-left: 6px; gap: 8px; overflow: hidden; border-top: 1px solid #ddd; background: #ececec; }
.scroll-arrow { border: 4px solid transparent; border-right: 5px solid #333; border-left: 0; }
.scroll-thumb { align-self: stretch; width: 15px; border: 1px solid #999; border-bottom: 0; border-radius: 2px 2px 0 0; background: linear-gradient(#fff, #ddd); }

/* Component manager window */
.dialog {
  position: absolute;
  left: 334px;
  top: 102px;
  width: 696px;
  display: flex;
  flex-direction: column;
  padding: 0 6px 6px;
  border: 1px solid #1c2733;
  border-radius: 7px;
  background: linear-gradient(100deg, #b4d2ef, #8cbdec 30%, #8fbfee 70%, #b5d5f3) 0 0 / 100% 29px no-repeat, linear-gradient(#b5d2ee, #dceafa 100px, #dceafa 141px, #8fbdea 142px, #b9daff 170px);
  box-shadow: inset 0 0 0 1px #e4f2ff, 1px 5px 12px 2px rgba(0, 0, 0, .75);
}
.caption { position: relative; display: flex; align-items: center; height: 28px; padding-left: 1px; gap: 5px; }
.caption > svg { width: 16px; height: 16px; }
.caption h1 { margin: 0; font: 12px/16px "Noto Sans CJK SC", sans-serif; text-shadow: 0 0 8px #fff, 0 0 8px #fff; }
.haze { position: absolute; top: 8px; height: 4px; filter: blur(3px); background: #35516d; }
.haze-shape { left: 136px; width: 96px; }
.haze-formula { left: 265px; width: 68px; opacity: .4; }
.window-buttons {
  display: flex;
  align-self: flex-start;
  margin-left: auto;
  border: 1px solid #4d6070;
  border-top: 0;
  border-radius: 0 0 5px 5px;
  overflow: hidden;
}
.window-buttons button { width: 27px; height: 18px; display: grid; place-items: center; border-right: 1px solid #4d6070; background: linear-gradient(#c9dcec, #b5cce0 48%, #8aa6bf 50%, #b0cfe9); }
.window-buttons svg { width: 20px; height: 14px; }
.window-buttons .win-close { width: 47px; border-right: 0; background: linear-gradient(#e5aaa0, #d0766a 48%, #b72f1e 50%, #d6704f); }

.client { display: flex; flex-direction: column; border: 1px solid #5f7389; background: #f0f0f0; }
.dialog-bar { height: 28px; padding-left: 4px; border-bottom: 1px solid #a5aabb; }
.panes { display: flex; height: 394px; gap: 3px; }
.types { width: 161px; border: 1px solid #828790; border-top: 0; padding: 1px 0 0 9px; background: #fff; }
.parts { flex: 1; border: 1px solid #a0a0a0; border-top: 0; padding-left: 1px; background: #fff; }
.part-grid { width: 355px; }
.part-grid tr { height: 19px; }
.part-grid thead tr { height: 20px; }
.part-grid th:first-child { width: 31px; }
.part-grid .focus { background: #dfefff; }

.actions { display: flex; justify-content: flex-end; align-items: center; gap: 15px; height: 41px; padding: 0 13px 0 0; }
.actions button {
  width: 72px;
  height: 23px;
  border: 1px solid #707070;
  border-radius: 3px;
  box-shadow: inset 0 0 0 1px #fafafa;
  background: linear-gradient(#f2f2f2, #ebebeb 49%, #ddd 51%, #cfcfcf);
}

/* Red pointers drawn over the windows */
.marks { position: absolute; left: 0; top: 0; fill: #fd3a37; pointer-events: none; }
```
